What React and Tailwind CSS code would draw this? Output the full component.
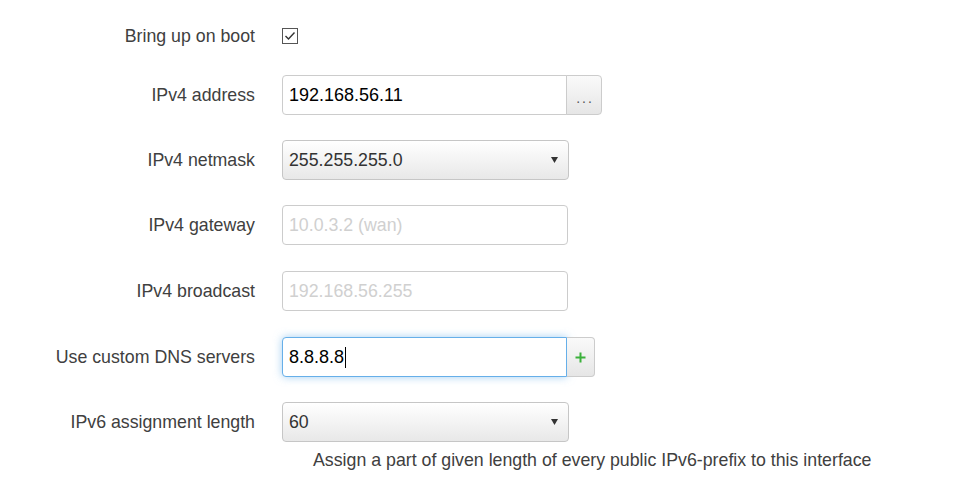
import { useState } from "react";

const font = { fontFamily: '"Liberation Sans", Arial, sans-serif' };

function Row({ label, children, className = "mt-[25px]" }) {
  return (
    <div className={"flex items-center h-[40px] " + className}>
      <div className="w-[255px] shrink-0 text-right text-[17.75px] text-[#404040]">{label}</div>
      <div className="ml-[27px] flex items-center">{children}</div>
    </div>
  );
}

function TextInput({ value, placeholder, width = "w-[286px]" }) {
  return (
    <div className={"h-[40px] rounded-[4px] border border-[#cccccc] bg-white flex items-center px-[6px] " + width}>
      {value ? (
        <span className="text-[18px] text-black">{value}</span>
      ) : (
        <span className="text-[17.75px] text-[#d0d0d0]">{placeholder}</span>
      )}
    </div>
  );
}

function Select({ value }) {
  return (
    <div className="h-[40px] w-[287px] rounded-[4px] border border-[#c6c6c6] bg-gradient-to-b from-white to-[#e8e8e8] flex items-center justify-between pl-[6px] pr-[10px]">
      <span className="text-[17.75px] text-[#333333]">{value}</span>
      <svg width="7" height="6" viewBox="0 0 7 6">
        <path d="M0 0 L7 0 L3.5 6 Z" fill="#333" />
      </svg>
    </div>
  );
}

export default function App() {
  const [checked] = useState(true);
  return (
    <div className="w-[969px] h-[484px] bg-white overflow-hidden" style={font}>
      <Row label="Bring up on boot" className="mt-[16px]">
        <div className="w-[16px] h-[16px] border border-[#555] bg-white flex items-center justify-center">
          {checked && (
            <svg width="12" height="10" viewBox="0 0 12 10">
              <path d="M1.5 5 L4.5 8 L10.5 1.5" fill="none" stroke="#333" strokeWidth="1.4" />
            </svg>
          )}
        </div>
      </Row>

      <Row label="IPv4 address" className="mt-[19px]">
        <div className="flex">
          <div className="h-[40px] w-[285px] rounded-l-[4px] border border-[#cccccc] bg-white flex items-center px-[6px]">
            <span className="text-[18px] text-black">192.168.56.11</span>
          </div>
          <div className="h-[40px] w-[36px] -ml-px rounded-r-[4px] border border-[#cccccc] bg-gradient-to-b from-[#fafafa] to-[#e6e6e6] flex items-center justify-center pt-[6px] text-[14px] text-[#555] tracking-[2px] pl-[2px]">
            ...
          </div>
        </div>
      </Row>

      <Row label="IPv4 netmask">
        <Select value="255.255.255.0" />
      </Row>

      <Row label="IPv4 gateway">
        <TextInput placeholder="10.0.3.2 (wan)" />
      </Row>

      <Row label="IPv4 broadcast" className="mt-[26px]">
        <TextInput placeholder="192.168.56.255" />
      </Row>

      <Row label="Use custom DNS servers" className="mt-[26px]">
        <div className="flex">
          <div className="h-[40px] w-[285px] rounded-l-[4px] border border-[#66afe9] bg-white flex items-center px-[6px] shadow-[0_0_8px_rgba(102,175,233,0.6)]">
            <span className="text-[18px] text-black">8.8.8.8</span>
            <span className="w-px h-[21px] bg-black ml-[1px]" />
          </div>
          <div className="h-[40px] w-[28px] rounded-r-[4px] border border-l-0 border-[#cccccc] bg-gradient-to-b from-[#fafafa] to-[#e6e6e6] flex items-center justify-center">
            <svg width="11" height="11" viewBox="0 0 11 11">
              <path d="M5.5 0.5 V10.5 M0.5 5.5 H10.5" stroke="#3bb13b" strokeWidth="2" />
            </svg>
          </div>
        </div>
      </Row>

      <Row label="IPv6 assignment length">
        <Select value="60" />
      </Row>

      <div className="ml-[313px] mt-[8px] text-[17.75px] text-[#404040] leading-[20px]">
        Assign a part of given length of every public IPv6-prefix to this interface
      </div>
    </div>
  );
}
